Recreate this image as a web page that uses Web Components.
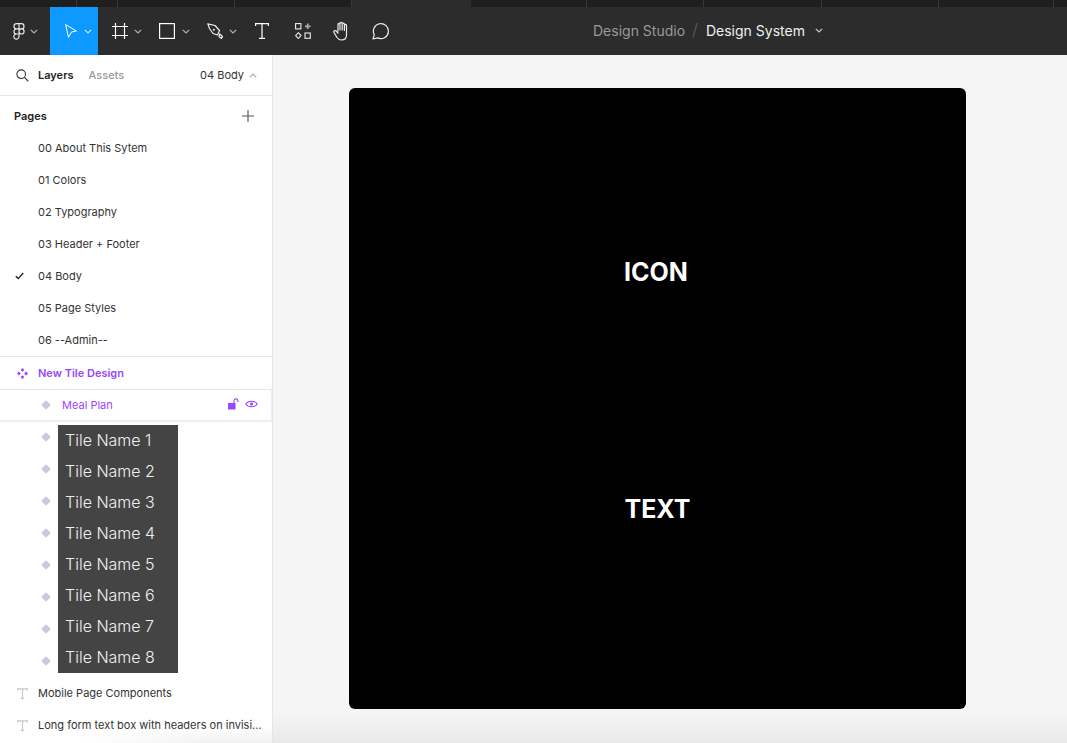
<!DOCTYPE html>
<html>
<head>
<meta charset="utf-8">
<title>Design System</title>
<style>
  html, body { margin: 0; height: 100%; overflow: hidden; }
  body { font-family: Inter, "Liberation Sans", sans-serif; }
</style>
</head>
<body>
<fig-app>
  <fig-tabstrip slot="tabs"></fig-tabstrip>
  <fig-toolbar slot="toolbar"></fig-toolbar>
  <fig-sidebar slot="side">
    <fig-row kind="page">00 About This Sytem</fig-row>
    <fig-row kind="page">01 Colors</fig-row>
    <fig-row kind="page">02 Typography</fig-row>
    <fig-row kind="page">03 Header + Footer</fig-row>
    <fig-row kind="page" checked>04 Body</fig-row>
    <fig-row kind="page">05 Page Styles</fig-row>
    <fig-row kind="page">06 --Admin--</fig-row>
    <fig-row slot="layers" kind="component">New Tile Design</fig-row>
    <fig-row slot="layers" kind="selected">Meal Plan</fig-row>
    <fig-tile-list slot="layers">
      <span>Tile Name 1</span><span>Tile Name 2</span><span>Tile Name 3</span><span>Tile Name 4</span>
      <span>Tile Name 5</span><span>Tile Name 6</span><span>Tile Name 7</span><span>Tile Name 8</span>
    </fig-tile-list>
    <fig-row slot="layers" kind="text">Mobile Page Components</fig-row>
    <fig-row slot="layers" kind="text">Long form text box with headers on invisi...</fig-row>
  </fig-sidebar>
  <fig-canvas slot="main">
    <span slot="top">ICON</span>
    <span slot="bottom">TEXT</span>
  </fig-canvas>
</fig-app>

<script>
  const ICONS = {
    logo: `<svg width="12" height="17" viewBox="0 0 13 19" fill="none" stroke="#e8e8e8" stroke-width="1.300"><path d="M6.500 .7H3.800a2.800 2.800 0 0 0 0 5.800h2.700zM6.500 .7h2.700a2.800 2.800 0 0 1 0 5.800H6.500zM6.500 6.500H3.800a2.900 2.900 0 0 0 0 5.800h2.700zM12.200 9.400a2.850 2.850 0 1 1-5.700 0 2.850 2.850 0 0 1 5.700 0zM6.500 12.300H3.800a2.900 2.900 0 1 0 2.700 2.900z"/></svg>`,
    caret: `<svg width="8" height="5" viewBox="0 0 8 5" fill="none" stroke="currentColor" stroke-width="1.200"><path d="M.8.800 4 4 7.200.8"/></svg>`,
    move: `<svg width="12" height="14" viewBox="0 0 12 14" fill="none" stroke="#fff" stroke-width="1" stroke-linejoin="round"><path d="M.6.600 11.400 7 6.500 8 3.500 13.400z"/></svg>`,
    frame: `<svg width="16" height="16" viewBox="0 0 16 16" stroke="#fff" stroke-width="1.200" fill="none"><path d="M3.500 0v16M12.500 0v16M0 3.500h16M0 12.500h16"/></svg>`,
    rect: `<svg width="16" height="16" viewBox="0 0 16 16" stroke="#fff" stroke-width="1.200" fill="none"><rect x=".6" y=".6" width="14.800" height="14.800"/></svg>`,
    pen: `<svg width="16" height="16" viewBox="0 0 16 16" stroke="#eee" stroke-width="1.200" fill="none" stroke-linejoin="round"><path d="M.8.800 8 2.500l4.500 5-2 4.500-4.500-1.500-3.500-5zM12 13.500l2.500 2 1-2-2.700-2.500z"/><circle cx="6.800" cy="6.800" r="1" fill="#eee" stroke="none"/></svg>`,
    type: `<svg width="14" height="16" viewBox="0 0 14 16" stroke="#fff" stroke-width="1.200" fill="none"><path d="M.6 3V.6h12.800V3M7 .6v14.800M4 15.400h6"/></svg>`,
    resources: `<svg width="16" height="16" viewBox="0 0 16 16" stroke="#eee" stroke-width="1.100" fill="none"><rect x=".6" y=".6" width="5.300" height="5.300"/><rect x="10" y="10" width="5.300" height="5.300"/><path d="M3.300 9.700l2.700 2.900-2.700 2.900-2.700-2.900z"/><path d="M12.700.5v5.500M10 3.300h5.500" stroke="#aaa" stroke-width="1.700"/></svg>`,
    hand: `<svg width="18" height="20" viewBox="0 0 18 20" stroke="#eee" stroke-width="1.200" fill="none" stroke-linejoin="round" stroke-linecap="round"><path d="M5 10V3.500c0-1.400 2-1.400 2 0V9m0-6.500c0-1.600 2.200-1.600 2.200 0V9m0-5.800c0-1.500 2.200-1.500 2.200 0V9.500m0-5c0-1.400 2.100-1.400 2.100 0V14c0 3-2 5-5 5-2.500 0-3.500-1-4.500-2.500L1 11.500c-.8-1.300 1-2.600 2.200-1.500L5 12"/></svg>`,
    comment: `<svg width="18" height="18" viewBox="0 0 18 18" stroke="#eee" stroke-width="1.200" fill="none" stroke-linejoin="round"><path d="M1 17l1.300-4.300A7.500 7.500 0 1 1 5.700 15.900z"/></svg>`,
    search: `<svg width="13" height="13" viewBox="0 0 13 13" stroke="#333" stroke-width="1.100" fill="none"><circle cx="5.200" cy="5.200" r="4.300"/><path d="M8.400 8.400l4 4"/></svg>`,
    plus: `<svg width="12" height="12" viewBox="0 0 12 12" stroke="#555" stroke-width="1.100"><path d="M6 0v12M0 6h12"/></svg>`,
    check: `<svg width="9" height="8" viewBox="0 0 9 8" stroke="#222" stroke-width="1.400" fill="none"><path d="M.8 4.200 3.200 6.600 8.200 1"/></svg>`,
    comps: `<svg width="11" height="11" viewBox="0 0 11 11" fill="#9747ff"><path d="M5.500 0 7.400 1.900 5.500 3.800 3.600 1.900zM5.500 7.200 7.400 9.100 5.500 11 3.600 9.100zM1.900 3.600 3.800 5.500 1.900 7.400 0 5.500zM9.100 3.600 11 5.500 9.100 7.400 7.200 5.500z"/></svg>`,
    diamond: `<svg width="10" height="10" viewBox="0 0 10 10" fill="#cdc6dc"><path d="M5 .2 9.800 5 5 9.800.2 5z"/></svg>`,
    glyphT: `<svg width="11" height="11" viewBox="0 0 11 11" stroke="#c9c5d3" stroke-width="1.200" fill="none"><path d="M.6 2.400V.8h9.800v1.600M5.500.8v9.600M3.700 10.400h3.600"/></svg>`,
    lock: `<svg width="11" height="12" viewBox="0 0 11 12"><rect x="0" y="5" width="7.500" height="6.500" fill="#9747ff"/><path d="M6 5V2.800a1.900 1.900 0 0 1 3.800 0V4" fill="none" stroke="#9747ff" stroke-width="1.100"/></svg>`,
    eye: `<svg width="13" height="10" viewBox="0 0 14 10" fill="none" stroke="#9747ff" stroke-width="1.100"><path d="M.8 5C3.500 1 10.500 1 13.200 5 10.500 9 3.500 9 .8 5z"/><circle cx="7" cy="5" r="1.700" fill="#9747ff" stroke="none"/></svg>`
  };

  class FigApp extends HTMLElement {
    constructor() {
      super();
      this.attachShadow({ mode: "open" }).innerHTML = `
        <style>
          :host { display: grid; grid-template-rows: 7px 48px 1fr; grid-template-columns: 273px 1fr; width: 1067px; height: 743px; overflow: hidden; }
          ::slotted([slot=tabs]), ::slotted([slot=toolbar]) { grid-column: 1 / -1; }
        </style>
        <slot name="tabs"></slot>
        <slot name="toolbar"></slot>
        <slot name="side"></slot>
        <slot name="main"></slot>`;
    }
  }

  class FigTabstrip extends HTMLElement {
    constructor() {
      super();
      const widths = [77, 41, 117, 117, 119, 116, 117, 118, 117, 115, 13];
      const cells = widths.map((w, i) =>
        `<i style="width:${w}px" class="${i === 4 ? "active" : ""}"></i>`).join("");
      this.attachShadow({ mode: "open" }).innerHTML = `
        <style>
          :host { display: flex; background: #1e1e1e; }
          i { display: block; box-sizing: border-box; border-right: 1px solid #383838; height: 7px; }
          i.active { background: #2c2c2c; border-right-color: #2c2c2c; }
          i:last-child { border-right: 0; }
        </style>
        ${cells}`;
    }
  }

  class FigToolbar extends HTMLElement {
    constructor() {
      super();
      const tool = (icon, w, pad, gap, extra = "") =>
        `<div class="tool ${extra}" style="width:${w}px;padding-left:${pad}px;gap:${gap}px">${ICONS[icon]}${gap ? `<span class="caret">${ICONS.caret}</span>` : ""}</div>`;
      this.attachShadow({ mode: "open" }).innerHTML = `
        <style>
          :host { display: flex; position: relative; align-items: stretch; background: #2c2c2c; color: #fff; }
          .tool { display: flex; align-items: center; box-sizing: border-box; color: #b3b3b3; }
          .tool.on { background: #0d99ff; color: #cfe9ff; }
          .caret { display: flex; }
          .crumbs { position: absolute; left: 593px; top: -1px; height: 48px; display: flex; align-items: center; font-size: 14px; color: #999; white-space: nowrap; }
          .crumbs .sep { color: #5c5c5c; margin: 0 8px 0 7px; font-weight: 300; font-size: 17px; }
          .crumbs b { font-weight: 400; color: #f0f0f0; }
          .crumbs .caret { margin-left: 10px; color: #ccc; }
        </style>
        ${tool("logo", 50, 13, 5)}
        ${tool("move", 48, 15, 7, "on")}
        ${tool("frame", 48, 14, 6)}
        ${tool("rect", 48, 13, 7)}
        ${tool("pen", 48, 13, 6)}
        ${tool("type", 40, 13, 0)}
        ${tool("resources", 40, 13, 0)}
        ${tool("hand", 40, 11, 0)}
        ${tool("comment", 40, 10, 0)}
        <div class="crumbs">Design Studio<span class="sep">/</span><b>Design System</b><span class="caret">${ICONS.caret}</span></div>`;
    }
  }

  class FigSidebar extends HTMLElement {
    constructor() {
      super();
      this.attachShadow({ mode: "open" }).innerHTML = `
        <style>
          :host { display: block; position: relative; background: #fff; border-right: 1px solid #e5e5e5; font-size: 11px; color: #333; overflow: hidden; }
          header { display: flex; align-items: center; height: 41px; box-sizing: border-box; border-bottom: 1px solid #e5e5e5; padding: 0 15px 0 16px; }
          header .tab { font-weight: 600; color: #222; margin-left: 9px; }
          header .dim { font-weight: 500; color: #999; margin-left: 15px; }
          header .page { margin-left: auto; color: #333; display: flex; align-items: center; gap: 5px; }
          header .page svg { transform: rotate(180deg); color: #aaa; }
          .pages-head { display: flex; justify-content: space-between; align-items: center; height: 40px; padding: 0 18px 0 14px; font-weight: 600; color: #222; }
          .pages { border-bottom: 1px solid #e8e8e8; margin-top: -4px; }
          .fade { position: absolute; left: 80px; right: 0; bottom: 0; height: 16px; background: linear-gradient(#fff0, #f0f0f0); -webkit-mask-image: linear-gradient(to right, transparent, #000 70%); mask-image: linear-gradient(to right, transparent, #000 70%); }
        </style>
        <header>${ICONS.search}<span class="tab">Layers</span><span class="dim">Assets</span>
          <span class="page">04 Body ${ICONS.caret}</span></header>
        <div class="pages-head"><span>Pages</span>${ICONS.plus}</div>
        <div class="pages"><slot></slot></div>
        <slot name="layers"></slot>
        <div class="fade"></div>`;
    }
  }

  class FigRow extends HTMLElement {
    connectedCallback() {
      if (this.shadowRoot) return;
      const kind = this.getAttribute("kind") || "page";
      let lead = "", trail = "";
      if (kind === "page" && this.hasAttribute("checked")) lead = ICONS.check;
      if (kind === "component") lead = ICONS.comps;
      if (kind === "selected") lead = ICONS.diamond;
      if (kind === "text") lead = ICONS.glyphT;
      if (kind === "selected") trail = `<span class="tail">${ICONS.lock}${ICONS.eye}</span>`;
      this.attachShadow({ mode: "open" }).innerHTML = `
        <style>
          :host { display: flex; align-items: center; height: 32px; position: relative; white-space: nowrap; font-size: 11px; color: #333; }
          :host([kind=component]) { color: #9747ff; font-weight: 600; border-bottom: 1px solid #e8e8e8; }
          :host([kind=selected]) { color: #9747ff; height: 30px; border-bottom: 2px solid #eee; border-right: 2px solid #eee; margin-right: -1px; }
          .lead { width: 38px; flex: none; display: flex; padding-left: 17px; box-sizing: border-box; }
          :host([kind=selected]) .lead { width: 62px; padding-left: 41px; }
          :host([kind=page]) .lead { padding-left: 15px; }
          .tail { position: absolute; right: 13px; top: 8px; display: flex; align-items: center; gap: 6px; }
        </style>
        <span class="lead">${lead}</span><slot></slot>${trail}`;
    }
  }

  class FigTileList extends HTMLElement {
    constructor() {
      super();
      const rows = Array.from({ length: 8 }, () => `<div class="row">${ICONS.diamond}</div>`).join("");
      this.attachShadow({ mode: "open" }).innerHTML = `
        <style>
          :host { display: block; position: relative; height: 255px; }
          .row { height: 32px; display: flex; align-items: center; padding-left: 41px; transform: translateY(-1px); }
          .box { position: absolute; left: 58px; top: 3px; width: 120px; height: 248px; box-sizing: border-box; padding: 0 0 0 7px; background: #444; color: #f0f0f0; font-size: 16px; font-weight: 300; }
          .inner { display: grid; grid-auto-rows: 31px; align-items: center; margin-top: -1px; }
        </style>
        ${rows}
        <div class="box"><div class="inner"><slot></slot></div></div>`;
    }
  }

  class FigCanvas extends HTMLElement {
    constructor() {
      super();
      this.attachShadow({ mode: "open" }).innerHTML = `
        <style>
          :host { display: block; position: relative; background: #f5f5f5; padding: 33px 0 0 76px; overflow: hidden; }
          .board { width: 617px; height: 621px; background: #000; border-radius: 6px; color: #fff; font-size: 25px; font-weight: 700; position: relative; display: grid; grid-template-rows: 184px 237px; justify-items: center; align-items: end; box-sizing: border-box; }
          .cell { line-height: 24px; transform: translateY(12px); }
          .cell.t { margin-left: -3px; }
          .fade { position: absolute; left: 0; right: 0; bottom: 0; height: 32px; background: linear-gradient(#f5f5f500, #e9e9e9); }
        </style>
        <div class="board">
          <div class="cell t"><slot name="top"></slot></div>
          <div class="cell"><slot name="bottom"></slot></div>
        </div>
        <div class="fade"></div>`;
    }
  }

  customElements.define("fig-app", FigApp);
  customElements.define("fig-tabstrip", FigTabstrip);
  customElements.define("fig-toolbar", FigToolbar);
  customElements.define("fig-sidebar", FigSidebar);
  customElements.define("fig-row", FigRow);
  customElements.define("fig-tile-list", FigTileList);
  customElements.define("fig-canvas", FigCanvas);
</script>
</body>
</html>
